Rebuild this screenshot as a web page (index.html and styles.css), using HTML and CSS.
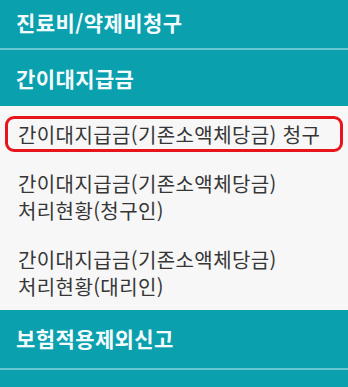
FILE: index.html
```html
<!DOCTYPE html>
<html lang="ko">
<head>
<meta charset="utf-8">
<link rel="stylesheet" href="styles.css">
</head>
<body>
<nav class="menu">
  <div class="head head-top">진료비/약제비청구</div>
  <div class="head head-open">간이대지급금</div>
  <ul class="sub">
    <li class="item active"><span class="box">간이대지급금(기존소액체당금) 청구</span></li>
    <li class="item">간이대지급금(기존소액체당금)<br>처리현황(청구인)</li>
    <li class="item">간이대지급금(기존소액체당금)<br>처리현황(대리인)</li>
  </ul>
  <div class="head head-next">보험적용제외신고</div>
  <div class="head head-last"></div>
</nav>
</body>
</html>
```

FILE: styles.css
```css
html, body {
  margin: 0;
  padding: 0;
  background: #f7f7f7;
}
.menu {
  width: 348px;
  height: 387px;
  overflow: hidden;
  font-family: "Noto Sans CJK KR", "Noto Sans", sans-serif;
}
.head {
  background: #0aa0ae;
  color: #f4fbfc;
  font-weight: 700;
  font-size: 21px;
  padding-left: 16px;
  display: flex;
  align-items: center;
  box-sizing: border-box;
  letter-spacing: 0.4px;
}
.head-top {
  height: 50px;
  padding-bottom: 4px;
  border-bottom: 2px solid #6ac6ce;
}
.head-open {
  height: 56px;
}
.head-next {
  height: 60px;
  padding-bottom: 2px;
  border-bottom: 2px solid #6ac6ce;
}
.head-last {
  height: 20px;
}
.sub {
  list-style: none;
  margin: 0;
  padding: 10px 0 10px;
  background: #f7f7f7;
  color: #363636;
  font-size: 20px;
  line-height: 27px;
  letter-spacing: 0.4px;
}
.item {
  padding: 0 18px;
}
.item.active {
  padding: 0 5px;
  margin-bottom: 18px;
}
.box {
  display: block;
  border: 3px solid #e8141b;
  border-radius: 9px;
  padding: 1.5px 10px;
}
.item:nth-child(2) {
  margin-bottom: 22px;
}
```
